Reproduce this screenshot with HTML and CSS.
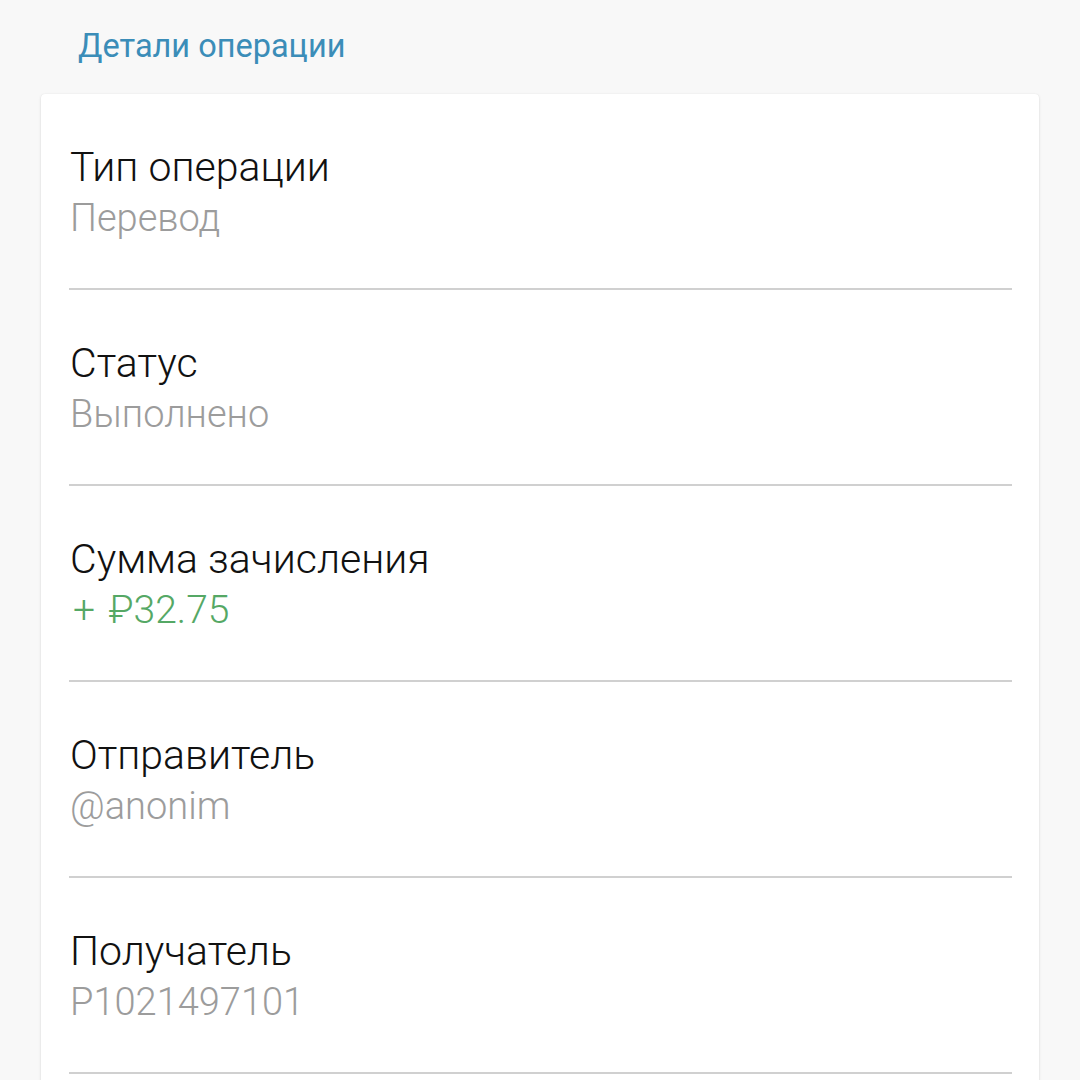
FILE: index.html
```html
<!DOCTYPE html>
<html lang="ru">
<head>
<meta charset="utf-8">
<link rel="stylesheet" href="styles.css">
</head>
<body>
<div class="page">
  <h1 class="title">Детали операции</h1>
  <div class="card">
    <div class="row">
      <div class="label">Тип операции</div>
      <div class="value">Перевод</div>
    </div>
    <div class="row">
      <div class="label">Статус</div>
      <div class="value">Выполнено</div>
    </div>
    <div class="row">
      <div class="label">Сумма зачисления</div>
      <div class="value green">+ ₽32.75</div>
    </div>
    <div class="row">
      <div class="label">Отправитель</div>
      <div class="value">@anonim</div>
    </div>
    <div class="row">
      <div class="label">Получатель</div>
      <div class="value">P1021497101</div>
    </div>
  </div>
</div>
</body>
</html>
```

FILE: styles.css
```css
html, body {
  margin: 0;
  padding: 0;
  background: #f8f8f8;
  font-family: Roboto, "Noto Sans", sans-serif;
}
.page {
  width: 1080px;
  height: 1080px;
  overflow: hidden;
  box-sizing: border-box;
  padding: 0 41px;
}
.title {
  margin: 0;
  padding: 26px 0 0 37px;
  height: 94px;
  box-sizing: border-box;
  font-size: 32.5px;
  line-height: 40px;
  font-weight: 400;
  color: #3b8db8;
}
.card {
  background: #fff;
  border-radius: 4px;
  box-shadow: 0 1px 3px rgba(0,0,0,0.12), 0 0 1px rgba(0,0,0,0.08);
  padding: 0 27px 0 28px;
  height: 1100px;
}
.row {
  padding: 49px 0 43px 1px;
  border-bottom: 2px solid #d0d0d0;
}
.label {
  font-size: 41px;
  line-height: 48px;
  font-weight: 300;
  color: #111;
}
.value {
  font-size: 38px;
  line-height: 54px;
  font-weight: 300;
  color: #9c9c9c;
}
.value.green {
  color: #55a865;
  font-size: 39px;
  padding-left: 3px;
  word-spacing: 4px;
}
```
